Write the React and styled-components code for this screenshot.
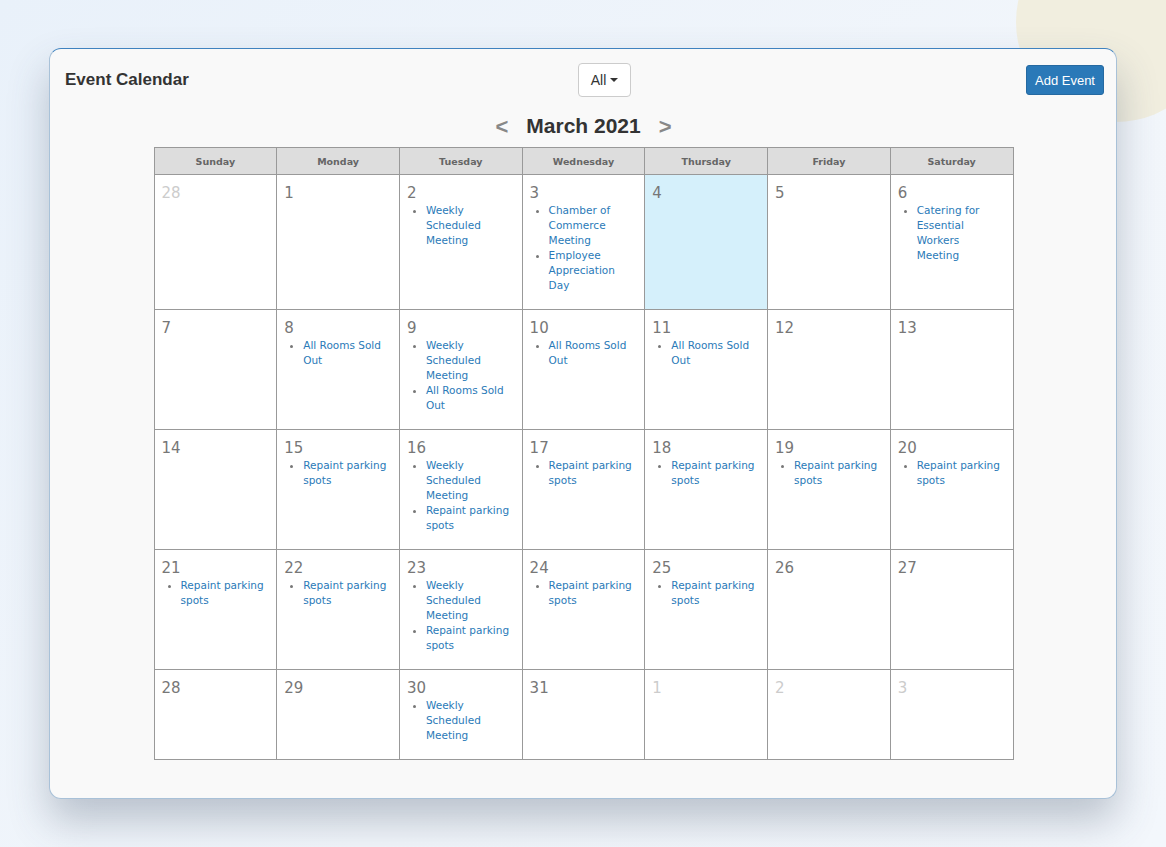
import React from "react";
import styled, { createGlobalStyle } from "styled-components";

const GlobalStyle = createGlobalStyle`
  html, body {
    margin: 0;
    padding: 0;
  }
  body {
    background: linear-gradient(135deg, #e9f1fa 0%, #f2f6fb 60%, #f3f7fc 100%);
    font-family: "Liberation Sans", Arial, sans-serif;
    min-height: 847px;
    overflow: hidden;
  }
`;

const Page = styled.div`
  position: relative;
  padding: 48px 49px 0 49px;
  height: 847px;
  box-sizing: border-box;
`;

const Blob = styled.div`
  position: absolute;
  top: -78px;
  right: -50px;
  width: 200px;
  height: 200px;
  border-radius: 50%;
  background: #f1eedf;
`;

const Card = styled.div`
  position: relative;
  background: #f9f9f9;
  border: 1px solid #a8c1d8;
  border-top-color: #3f82bf;
  border-radius: 12px;
  padding: 14px 13px 38px 14px;
  box-shadow: 0 22px 40px rgba(60, 75, 100, 0.3);
`;

const Header = styled.div`
  display: flex;
  align-items: center;
  justify-content: space-between;
  height: 34px;
`;

const Title = styled.h1`
  margin: 0 0 0 1px;
  font-size: 17px;
  font-weight: 600;
  color: #333;
  width: 118px;
  white-space: nowrap;
`;

const Dropdown = styled.button`
  display: flex;
  align-items: center;
  gap: 4px;
  height: 34px;
  padding: 0 12px;
  background: #fff;
  border: 1px solid #ccc;
  border-radius: 4px;
  font-family: "Liberation Sans", Arial, sans-serif;
  font-size: 14px;
  color: #333;
`;

const Caret = styled.span`
  display: inline-block;
  width: 0;
  height: 0;
  border-left: 4px solid transparent;
  border-right: 4px solid transparent;
  border-top: 4px solid #333;
`;

const AddButton = styled.button`
  height: 30px;
  margin-right: -1px;
  padding: 0 8px;
  background: #2a79b8;
  border: 1px solid #2569a1;
  border-radius: 3px;
  color: #fff;
  font-family: "Liberation Sans", Arial, sans-serif;
  font-size: 13px;
`;

const MonthNav = styled.div`
  display: flex;
  align-items: center;
  justify-content: center;
  gap: 18px;
  margin-top: 14px;
  height: 30px;
`;

const Arrow = styled.span`
  font-size: 22px;
  font-weight: bold;
  color: #888;
  line-height: 1;
  padding-top: 2px;
`;

const Month = styled.h2`
  margin: 0;
  font-size: 21px;
  font-weight: bold;
  color: #333;
`;

const Table = styled.table`
  width: 860px;
  margin: 6px auto 0 auto;
  border-collapse: collapse;
  table-layout: fixed;
  background: #fff;
  font-family: "DejaVu Sans", Verdana, sans-serif;
`;

const HeadCell = styled.th`
  height: 26px;
  padding: 0;
  background: #ddd;
  border: 1px solid #999;
  font-size: 9.5px;
  font-weight: bold;
  color: #666;
`;

const Cell = styled.td`
  vertical-align: top;
  border: 1px solid #999;
  padding: 8px 10px 16px 7px;
  background: ${(p) => (p.$today ? "#d5f0fb" : "#fff")};
`;

const DayNum = styled.div`
  font-size: 15px;
  line-height: 20px;
  color: ${(p) => (p.$muted ? "#ccc" : "#777")};
`;

const Events = styled.ul`
  margin: 0;
  padding-left: 19px;
  font-size: 10.5px;
  line-height: 15px;
  color: #777;
  list-style: disc;
`;

const EventLink = styled.a`
  color: #2a7ab8;
  text-decoration: none;
`;

const RPS = "Repaint parking spots";
const WSM = "Weekly Scheduled Meeting";
const ARSO = "All Rooms Sold Out";

const weeks = [
  [
    { d: 28, m: true },
    { d: 1 },
    { d: 2, e: [WSM] },
    { d: 3, e: ["Chamber of Commerce Meeting", "Employee Appreciation Day"] },
    { d: 4, today: true },
    { d: 5 },
    { d: 6, e: ["Catering for Essential Workers Meeting"] },
  ],
  [
    { d: 7 },
    { d: 8, e: [ARSO] },
    { d: 9, e: [WSM, ARSO] },
    { d: 10, e: [ARSO] },
    { d: 11, e: [ARSO] },
    { d: 12 },
    { d: 13 },
  ],
  [
    { d: 14 },
    { d: 15, e: [RPS] },
    { d: 16, e: [WSM, RPS] },
    { d: 17, e: [RPS] },
    { d: 18, e: [RPS] },
    { d: 19, e: [RPS] },
    { d: 20, e: [RPS] },
  ],
  [
    { d: 21, e: [RPS] },
    { d: 22, e: [RPS] },
    { d: 23, e: [WSM, RPS] },
    { d: 24, e: [RPS] },
    { d: 25, e: [RPS] },
    { d: 26 },
    { d: 27 },
  ],
  [
    { d: 28 },
    { d: 29 },
    { d: 30, e: [WSM] },
    { d: 31 },
    { d: 1, m: true },
    { d: 2, m: true },
    { d: 3, m: true },
  ],
];

const days = ["Sunday", "Monday", "Tuesday", "Wednesday", "Thursday", "Friday", "Saturday"];

export default function App() {
  return (
    <Page>
      <GlobalStyle />
      <Blob />
      <Card>
        <Header>
          <Title>Event Calendar</Title>
          <Dropdown>
            All <Caret />
          </Dropdown>
          <AddButton>Add Event</AddButton>
        </Header>
        <MonthNav>
          <Arrow>&lt;</Arrow>
          <Month>March 2021</Month>
          <Arrow>&gt;</Arrow>
        </MonthNav>
        <Table>
          <thead>
            <tr>
              {days.map((d) => (
                <HeadCell key={d}>{d}</HeadCell>
              ))}
            </tr>
          </thead>
          <tbody>
            {weeks.map((w, i) => (
              <tr key={i}>
                {w.map((c, j) => (
                  <Cell key={j} $today={c.today}>
                    <DayNum $muted={c.m}>{c.d}</DayNum>
                    {c.e && (
                      <Events>
                        {c.e.map((ev, k) => (
                          <li key={k}>
                            <EventLink href="#">{ev}</EventLink>
                          </li>
                        ))}
                      </Events>
                    )}
                  </Cell>
                ))}
              </tr>
            ))}
          </tbody>
        </Table>
      </Card>
    </Page>
  );
}
